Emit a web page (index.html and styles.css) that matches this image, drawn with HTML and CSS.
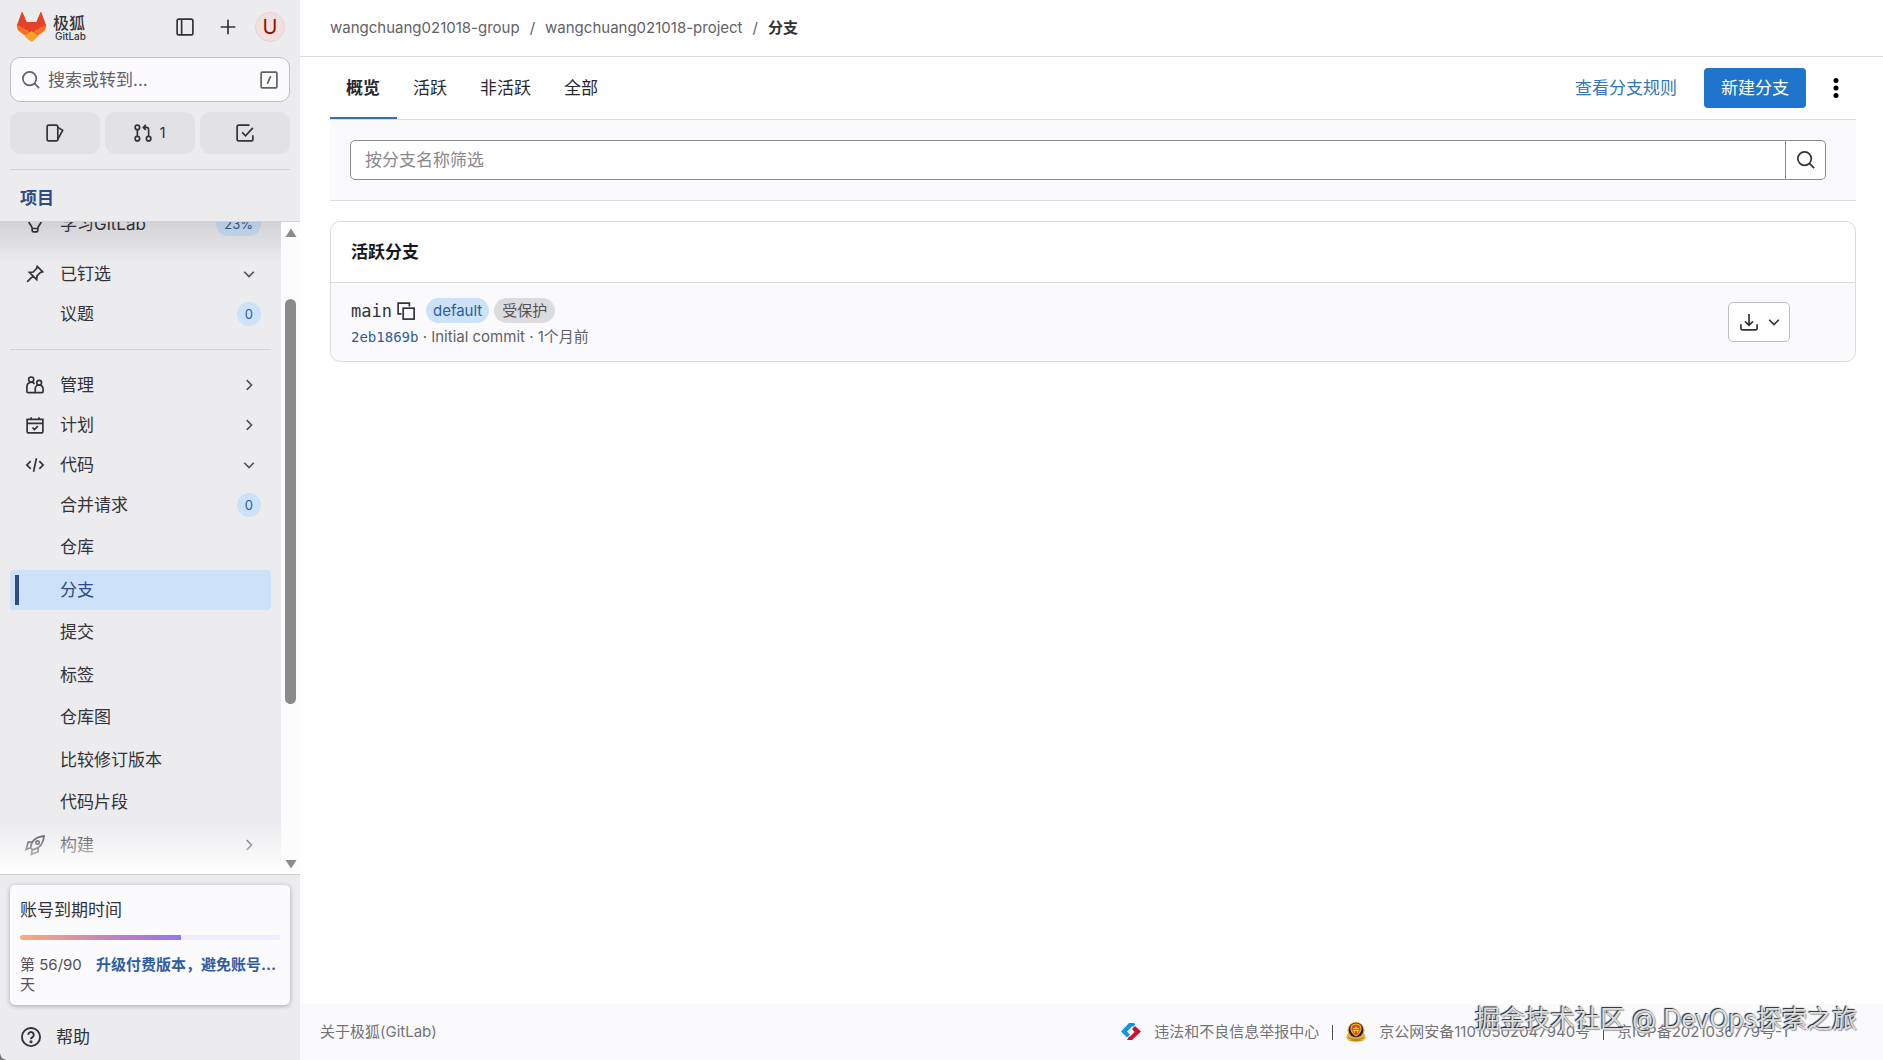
FILE: index.html
```html
<!DOCTYPE html>
<html lang="zh-CN">
<head>
  <meta charset="UTF-8" />
  <meta name="viewport" content="width=device-width, initial-scale=1.0" />
  <title>分支 · wangchuang021018-project · GitLab</title>
  <link rel="stylesheet" href="styles.css">
</head>
<body>
  <!-- shared icons -->
  <svg class="defs" aria-hidden="true">
    <symbol id="right" viewBox="0 0 16 16"><path d="M6 3.75 10.25 8 6 12.25"/></symbol>
    <symbol id="down" viewBox="0 0 16 16"><path d="M3.75 6 8 10.25 12.25 6"/></symbol>
    <symbol id="search" viewBox="0 0 16 16"><circle cx="6.75" cy="6.75" r="6"/><path d="m11 11 4.25 4.25"/></symbol>
  </svg>

  <aside class="sidebar">
    <div class="brand-bar">
      <a href="#" class="brand">
        <svg class="logo" viewBox="0 0 31 30">
          <path fill="#e24329" d="M5.6.4c.2-.5.9-.5 1.1 0L10.700 10h9.600L24.300.4c.2-.5.9-.5 1.1 0l4.800 13.200-7.700 4.700H8.500L.8 13.600z"/>
          <path fill="#e24329" d="m8 14 7.500 10L23 14z"/>
          <path fill="#fc6d26" d="M.8 13.600c2.500.2 5 1.200 7 2.700l7.700 5.700 7.700-5.700c2-1.500 4.500-2.500 7-2.700-.1 2-.6 4.500-2.500 6L15.500 28 3.300 19.600C1.400 18.100.9 15.600.8 13.600z"/>
          <path fill="#fca326" d="m15.500 19 7 5.200-5.600 4.900c-.8.7-2 .7-2.800 0l-5.600-4.900z"/>
        </svg>
        <span class="brand-name">极狐<small>GitLab</small></span>
      </a>
      <button class="icon-btn" aria-label="侧边栏"><svg class="icon" viewBox="0 0 16 16"><rect x="1" y="1" width="14" height="14" rx="1.5"/><path d="M5 1v14"/></svg></button>
      <button class="icon-btn" aria-label="新建"><svg class="icon" viewBox="0 0 16 16"><path d="M8 1.500v13M1.500 8h13"/></svg></button>
      <button class="avatar" aria-label="用户">U</button>
    </div>

    <button class="goto">
      <svg class="icon"><use href="#search"/></svg>
      <span>搜索或转到...</span>
      <svg class="icon" viewBox="0 0 16 16"><rect x="1" y="1" width="14" height="14" rx="1"/><path d="M9.500 4.500l-3 7"/></svg>
    </button>

    <div class="counters">
      <button aria-label="议题"><svg class="icon" viewBox="0 0 16 16"><rect x="1" y="1" width="9.5" height="14" rx="1.5"/><path d="m10.500 3 4.300 2.600-4.300 8"/></svg></button>
      <button aria-label="合并请求"><svg class="icon" viewBox="0 0 16 16"><circle cx="3" cy="3" r="2"/><circle cx="3" cy="13" r="2"/><circle cx="13" cy="13" r="2"/><path d="M3 5v6M13 11V5a2 2 0 0 0-2-2H8.500M10.500.8 8.300 3l2.200 2.200"/></svg>1</button>
      <button aria-label="待办事项"><svg class="icon" viewBox="0 0 16 16"><path d="M15 10v3.500a1.500 1.500 0 0 1-1.500 1.500h-11A1.500 1.500 0 0 1 1 13.500v-11A1.500 1.500 0 0 1 2.500 1H12M5.500 7.500 8.500 10.500l6.500-7"/></svg></button>
    </div>

    <h2 class="context">项目</h2>

    <div class="scroller">
      <nav class="nav">
        <a href="#" class="item item-first">
          <svg class="icon" viewBox="0 0 16 16"><path d="M5.500 12c0-3-3-3.500-3-6.500a5.500 5.500 0 0 1 11 0c0 3-3 3.500-3 6.500zM5.500 12v1.500A1.500 1.500 0 0 0 7 15h2a1.500 1.500 0 0 0 1.500-1.500V12"/></svg>
          <span>学习GitLab</span><b class="badge">23%</b>
        </a>
        <a href="#" class="item">
          <svg class="icon" viewBox="0 0 16 16"><path d="M10 1.200 14.800 6l-2 .6-3 3-.3 3.400L3 6.500l3.400-.3 3-3zM6.200 9.800 1 15"/></svg>
          <span>已钉选</span><svg class="chev"><use href="#down"/></svg>
        </a>
        <a href="#" class="item sub"><span>议题</span><b class="badge">0</b></a>
        <hr>
        <a href="#" class="item">
          <svg class="icon" viewBox="0 0 16 16"><circle cx="4.6" cy="3.2" r="2.3"/><path d="M8 14.800H1.800a1 1 0 0 1-1-1V9.300a3.800 3.800 0 0 1 6.800-2.300"/><circle cx="11.7" cy="6" r="2.1"/><path d="M8.200 14.800v-3.300a3.500 3.500 0 0 1 7 0v2.300a1 1 0 0 1-1 1z"/></svg>
          <span>管理</span><svg class="chev"><use href="#right"/></svg>
        </a>
        <a href="#" class="item">
          <svg class="icon" viewBox="0 0 16 16"><path d="M1 3h14v11a1 1 0 0 1-1 1H2a1 1 0 0 1-1-1zM1 6.500h14M4.500 1v2M11.500 1v2M5.700 10.200l1.800 1.800 3-3"/></svg>
          <span>计划</span><svg class="chev"><use href="#right"/></svg>
        </a>
        <a href="#" class="item">
          <svg class="icon" viewBox="0 0 16 16"><path d="M4.200 4.500.8 8l3.400 3.500M11.800 4.500 15.200 8l-3.400 3.500M9.300 2 6.700 14"/></svg>
          <span>代码</span><svg class="chev"><use href="#down"/></svg>
        </a>
        <div class="sub-list">
          <a href="#" class="item sub"><span>合并请求</span><b class="badge">0</b></a>
          <a href="#" class="item sub"><span>仓库</span></a>
          <a href="#" class="item sub active"><span>分支</span></a>
          <a href="#" class="item sub"><span>提交</span></a>
          <a href="#" class="item sub"><span>标签</span></a>
          <a href="#" class="item sub"><span>仓库图</span></a>
          <a href="#" class="item sub"><span>比较修订版本</span></a>
          <a href="#" class="item sub"><span>代码片段</span></a>
        </div>
        <a href="#" class="item">
          <svg class="icon" viewBox="0 0 16 16"><path d="M4 10.500C4.500 5 8.500.8 16 0c-.3 7-4.500 11-10 12.300zM5.500 5.500H2L0 12l4-1.500M10.800 10.500V14l-6 2.300L5.500 12.300"/><circle cx="10.3" cy="5.8" r="1.5"/></svg>
          <span>构建</span><svg class="chev"><use href="#right"/></svg>
        </a>
      </nav>
      <div class="scrollbar">
        <svg width="12" height="10" viewBox="0 0 12 10"><path d="M6 .5 11.500 9H.5z"/></svg>
        <i class="thumb"></i>
        <svg width="12" height="10" viewBox="0 0 12 10"><path d="M6 9.500.5 1h11z"/></svg>
      </div>
    </div>

    <div class="trial">
      <p class="trial-title">账号到期时间</p>
      <div class="progress"><div style="width: 62%"></div></div>
      <div class="trial-row"><span>第 56/90 天</span><a href="#">升级付费版本，避免账号被冻结</a></div>
    </div>
    <a href="#" class="help">
      <svg class="icon" viewBox="0 0 16 16"><circle cx="8" cy="8" r="7.25"/><path d="M5.800 6.300a2.200 2.200 0 1 1 3.400 1.800c-.8.500-1.200.8-1.200 1.700"/><circle cx="8" cy="11.8" r=".5"/></svg>
      帮助
    </a>
  </aside>

  <div class="main">
    <header class="topbar">
      <a href="#">wangchuang021018-group</a><span>/</span><a href="#">wangchuang021018-project</a><span>/</span><strong>分支</strong>
    </header>

    <main class="content">
      <div class="tabs">
        <a href="#" class="tab current">概览</a>
        <a href="#" class="tab">活跃</a>
        <a href="#" class="tab">非活跃</a>
        <a href="#" class="tab">全部</a>
        <div class="actions">
          <a href="#" class="rules">查看分支规则</a>
          <button class="primary">新建分支</button>
          <button class="more" aria-label="更多操作"><svg width="20" height="20" viewBox="0 0 16 16"><circle cx="8" cy="2" r="2"/><circle cx="8" cy="8" r="2"/><circle cx="8" cy="14" r="2"/></svg></button>
        </div>
      </div>

      <form class="filter">
        <input type="text" placeholder="按分支名称筛选" aria-label="按分支名称筛选">
        <button type="button" aria-label="搜索"><svg class="icon"><use href="#search"/></svg></button>
      </form>

      <section class="card">
        <h2>活跃分支</h2>
        <div class="branch">
          <div>
            <div class="branch-name">
              <a href="#" class="mono">main</a>
              <button class="copy" aria-label="复制"><svg class="icon" viewBox="0 0 16 16"><path d="M4 10.500H1V1h10v3"/><rect x="5.5" y="5.5" width="9.7" height="9.7"/></svg></button>
              <span class="tag blue">default</span>
              <span class="tag">受保护</span>
            </div>
            <div class="commit"><a href="#" class="mono">2eb1869b</a> · Initial commit · 1个月前</div>
          </div>
          <button class="download" aria-label="下载">
            <svg class="icon" viewBox="0 0 16 16"><path d="M8 .8v10M4.500 7.500 8 11l3.500-3.500M.8 10v3.500A1.500 1.500 0 0 0 2.300 15h11.400a1.500 1.500 0 0 0 1.500-1.500V10"/></svg>
            <svg class="chev"><use href="#down"/></svg>
          </button>
        </div>
      </section>
    </main>

    <footer class="footer">
      <a href="#">关于极狐(GitLab)</a>
      <div class="legal">
        <svg width="20" height="18" viewBox="0 0 20 18"><path fill="#1296db" d="M12.500 0H8L0 8.500 6 14.500l3-3-3-3L11 3.500h1.500L14.500 1z"/><path fill="#d0112b" d="m14 3-3 3 2.500 3L9 13.500H8L6 17h5l9-8.500z"/></svg>
        <a href="#">违法和不良信息举报中心</a>
        <i></i>
        <svg width="20" height="20" viewBox="0 0 20 20"><path fill="#e8b13a" d="M1.500 12h17l1.500 3.500-3 3.500-7 1-7-1-3-3.500z"/><circle cx="10" cy="8.5" r="8.5" fill="#e3ab35"/><circle cx="10" cy="8" r="7.3" fill="#2b1b2b"/><path fill="#f0b93c" d="M10 1.500c4 0 6 2.500 5.500 6S12.500 13 10 14.500C7.500 13 5 11 4.500 7.500S6 1.500 10 1.500z"/><path fill="#e5402a" d="M10 2.700c3.200 0 4.800 1.800 4.400 4.800S12 12 10 13.200C8 12 6 10.500 5.600 7.500S6.800 2.700 10 2.700z"/><path stroke="#f7cf46" d="M7 6.500h6M6.500 8.500h7M8.300 8.500V11M11.700 8.500V11M10 4.500v2"/><path fill="none" stroke="#b87818" d="M2 15.500c5 2.500 11 2.500 16 0M5 18.300h10"/></svg>
        <a href="#">京公网安备11010502047940号</a>
        <i></i>
        <a href="#">京ICP备2021036779号-1</a>
      </div>
    </footer>
  </div>
  <div class="watermark">掘金技术社区 @ DevOps探索之旅</div>
</body>
</html>
```

FILE: styles.css
```css
* {
  box-sizing: border-box;
}

body {
  display: flex;
  min-height: 100vh;
  margin: 0;
  background: #fff;
  color: #333238;
  font-family: Inter, "Noto Sans CJK SC", sans-serif;
  font-size: 17px;
  line-height: 20px;
}

a {
  color: inherit;
  text-decoration: none;
}

button {
  display: flex;
  align-items: center;
  justify-content: center;
  padding: 0;
  border: 0;
  background: none;
  color: inherit;
  font: inherit;
  cursor: pointer;
}

.defs {
  position: absolute;
  width: 0;
  height: 0;
}

.icon, .chev {
  flex: none;
  width: 18px;
  height: 18px;
  fill: none;
  stroke: currentColor;
  stroke-width: 1.5;
  overflow: visible;
}

.mono {
  font-family: "DejaVu Sans Mono", monospace;
}

/* sidebar */
.sidebar {
  display: flex;
  flex-direction: column;
  flex: none;
  width: 300px;
  height: 100vh;
  background: radial-gradient(circle at 100% 0, #ececef 5px, #77777b 6px) left bottom / 6px 6px no-repeat #ececef;
}

.brand-bar {
  display: flex;
  align-items: center;
  height: 54px;
  padding: 0 15px 0 16px;
}

.brand {
  display: flex;
  align-items: center;
  gap: 6px;
  margin-right: auto;
}

.logo {
  width: 31px;
  height: 30px;
}

.brand-name {
  padding-top: 2px;
  font-size: 16px;
  font-weight: 500;
  line-height: 17px;
}

.brand-name small {
  display: block;
  padding-left: 2px;
  font-size: 10px;
  line-height: 9px;
}

.icon-btn {
  width: 43px;
  height: 40px;
}

.avatar {
  width: 30px;
  height: 30px;
  margin-left: 6px;
  border: 1px solid #e6d3d2;
  border-radius: 50%;
  background: #f3dfde;
  color: #8d1300;
  font-size: 20px;
}

.goto {
  height: 45px;
  margin: 3px 10px 10px;
  padding: 0 11px;
  gap: 8px;
  border: 1px solid #bfbfc3;
  border-radius: 10px;
  background: #fbfafd;
  color: #626168;
}

.goto span {
  flex: 1;
  text-align: left;
}

.counters {
  display: flex;
  gap: 5px;
  margin: 0 10px;
  padding-bottom: 15px;
  border-bottom: 1px solid #d3d3d6;
}

.counters button {
  flex: 1;
  gap: 7px;
  height: 42px;
  border-radius: 10px;
  background: #e2e2e5;
  font-size: 15px;
}

.context {
  margin: 0;
  padding: 18px 20px 13px;
  border-bottom: 1px solid #d3d3d6;
  color: #2f4b82;
  font-size: 17px;
  font-weight: 700;
  line-height: 20px;
}

.scroller {
  position: relative;
  display: flex;
  flex: 1;
  min-height: 0;
  overflow: hidden;
}

.scroller::before, .scroller::after {
  content: "";
  position: absolute;
  left: 0;
  right: 19px;
  top: 0;
  height: 42px;
  background: linear-gradient(rgba(31, 30, 36, 0.12), rgba(31, 30, 36, 0));
  pointer-events: none;
}

.scroller::after {
  top: auto;
  bottom: 0;
  height: 52px;
  background: linear-gradient(rgba(255, 255, 255, 0), #fff);
}

.nav {
  flex: 1;
  padding: 0 10px;
}

.item {
  display: flex;
  align-items: center;
  gap: 16px;
  height: 40px;
  padding: 0 10px 0 16px;
  border-radius: 4px;
}

.item span {
  flex: 1;
}

.item .chev {
  margin-right: 3px;
  color: #535158;
}

.item-first {
  margin: -18px 0 10px;
}

.sub {
  padding-left: 50px;
}

.active {
  background: linear-gradient(90deg, transparent 5px, #2f4b82 5px, #2f4b82 9px, transparent 9px) center / 100% 30px no-repeat #cbe2f9;
  color: #2f4b82;
}

.badge {
  min-width: 24px;
  padding: 0 8px;
  border-radius: 12px;
  background: #cbe2f9;
  color: #2f5b90;
  font-size: 13px;
  font-weight: 400;
  line-height: 24px;
  text-align: center;
}

.nav hr {
  margin: 15px 0;
  border: 0;
  border-top: 1px solid #d3d3d6;
}

.sub-list {
  display: flex;
  flex-direction: column;
  justify-content: space-between;
  height: 337px;
  margin-bottom: 3px;
}

.scrollbar {
  display: flex;
  flex-direction: column;
  align-items: center;
  width: 19px;
  padding: 6px 0;
  background: #fcfcfc;
  fill: #8b8b8b;
}

.thumb {
  width: 11px;
  height: 405px;
  margin: 61px 0 auto;
  border-radius: 6px;
  background: #8b8b8b;
}

.trial {
  position: relative;
  margin: 10px 10px 8px;
  padding: 15px 10px 10px;
  border-radius: 5px;
  background: #fbfafd;
  box-shadow: 0 1px 4px rgba(31, 30, 36, 0.35);
}

.trial::before {
  content: "";
  position: absolute;
  left: -10px;
  right: -10px;
  top: -11px;
  border-top: 1px solid #cfcfd3;
}

.trial-title {
  margin: 0 0 15px;
}

.progress {
  height: 5px;
  border-radius: 3px;
  background: #f1ecff;
  overflow: hidden;
}

.progress div {
  height: 5px;
  background: linear-gradient(90deg, #fbab78, #b87fc4 65%, #9475f5);
}

.trial-row {
  display: flex;
  gap: 10px;
  margin-top: 15px;
  color: #535158;
  font-size: 15px;
}

.trial-row span {
  width: 66px;
  flex: none;
}

.trial-row a {
  overflow: hidden;
  color: #2f5ca0;
  font-weight: 700;
  text-overflow: ellipsis;
  white-space: nowrap;
}

.help {
  display: flex;
  align-items: center;
  gap: 15px;
  height: 47px;
  padding: 0 21px;
}

.help .icon {
  width: 20px;
  height: 20px;
}

/* main column */
.main {
  display: flex;
  flex-direction: column;
  flex: 1;
  min-width: 0;
}

.topbar {
  display: flex;
  align-items: center;
  gap: 10px;
  height: 57px;
  padding: 0 30px;
  border-bottom: 1px solid #dcdcde;
  color: #626168;
  font-size: 15px;
}

.topbar strong {
  color: #333238;
}

.content {
  flex: 1;
  padding: 0 27px 0 30px;
}

.tabs {
  display: flex;
  border-bottom: 1px solid #dcdcde;
  color: #28272d;
}

.tab {
  padding: 21px 17px 21px 16px;
}

.current {
  box-shadow: inset 0 -2px #2f74b5;
  font-weight: 700;
}

.actions {
  display: flex;
  align-items: center;
  margin-left: auto;
}

.rules {
  margin-right: 27px;
  color: #2f76bb;
}

.primary {
  height: 40px;
  padding: 0 17px;
  border-radius: 4px;
  background: #1f75cb;
  color: #fff;
}

.more {
  width: 40px;
  height: 40px;
  margin-left: 10px;
}

.filter {
  display: flex;
  padding: 20px 30px 20px 20px;
  border-bottom: 1px solid #dcdcde;
  background: #fafafc;
}

.filter input {
  flex: 1;
  min-width: 0;
  height: 40px;
  padding: 0 14px;
  border: 1px solid #89888d;
  border-radius: 5px 0 0 5px;
  background: #fff;
  font: inherit;
}

.filter input::placeholder {
  color: #89888d;
}

.filter button {
  width: 40px;
  border: 1px solid #89888d;
  border-left: 0;
  border-radius: 0 5px 5px 0;
  background: #fff;
}

.card {
  margin-top: 20px;
  border: 1px solid #dcdcde;
  border-radius: 10px;
  background: #fafafc;
}

.card h2 {
  margin: 0;
  padding: 20px;
  border-bottom: 1px solid #dcdcde;
  border-radius: 10px 10px 0 0;
  background: #fff;
  color: #18171d;
  font-size: 17px;
  line-height: 20px;
}

.branch {
  display: flex;
  align-items: flex-start;
  justify-content: space-between;
  padding: 15px 65px 14px 20px;
}

.branch-name {
  display: flex;
  align-items: center;
}

.copy {
  margin: 0 11px 0 5px;
}

.tag {
  margin-right: 5px;
  padding: 0 8px;
  border-radius: 13px;
  background: #dcdcde;
  color: #535158;
  font-size: 15px;
  line-height: 25px;
}

.blue {
  padding: 0 7px;
  background: #cbe2f9;
  color: #2f5ca0;
}

.commit {
  margin-top: 4px;
  color: #626168;
  font-size: 15px;
}

.commit .mono {
  color: #2f5ca0;
  font-size: 14px;
}

.download {
  justify-content: flex-end;
  gap: 7px;
  width: 62px;
  height: 40px;
  margin-top: 4px;
  padding-right: 6px;
  border: 1px solid #bfbfc3;
  border-radius: 5px;
  background: #fff;
}

.footer {
  display: flex;
  align-items: center;
  justify-content: space-between;
  height: 56px;
  padding: 0 95px 0 20px;
  background: #fafafc;
  color: #737278;
  font-size: 15px;
}

.legal {
  display: flex;
  align-items: center;
  gap: 13px;
}

.legal i {
  height: 15px;
  border-left: 1px solid #535158;
}

.watermark {
  position: absolute;
  right: 26px;
  bottom: 23px;
  color: #ddd;
  font-size: 25px;
  line-height: 36px;
  text-shadow: -1px -1px 1px #222, 1px 1px 1px #999;
}
```
